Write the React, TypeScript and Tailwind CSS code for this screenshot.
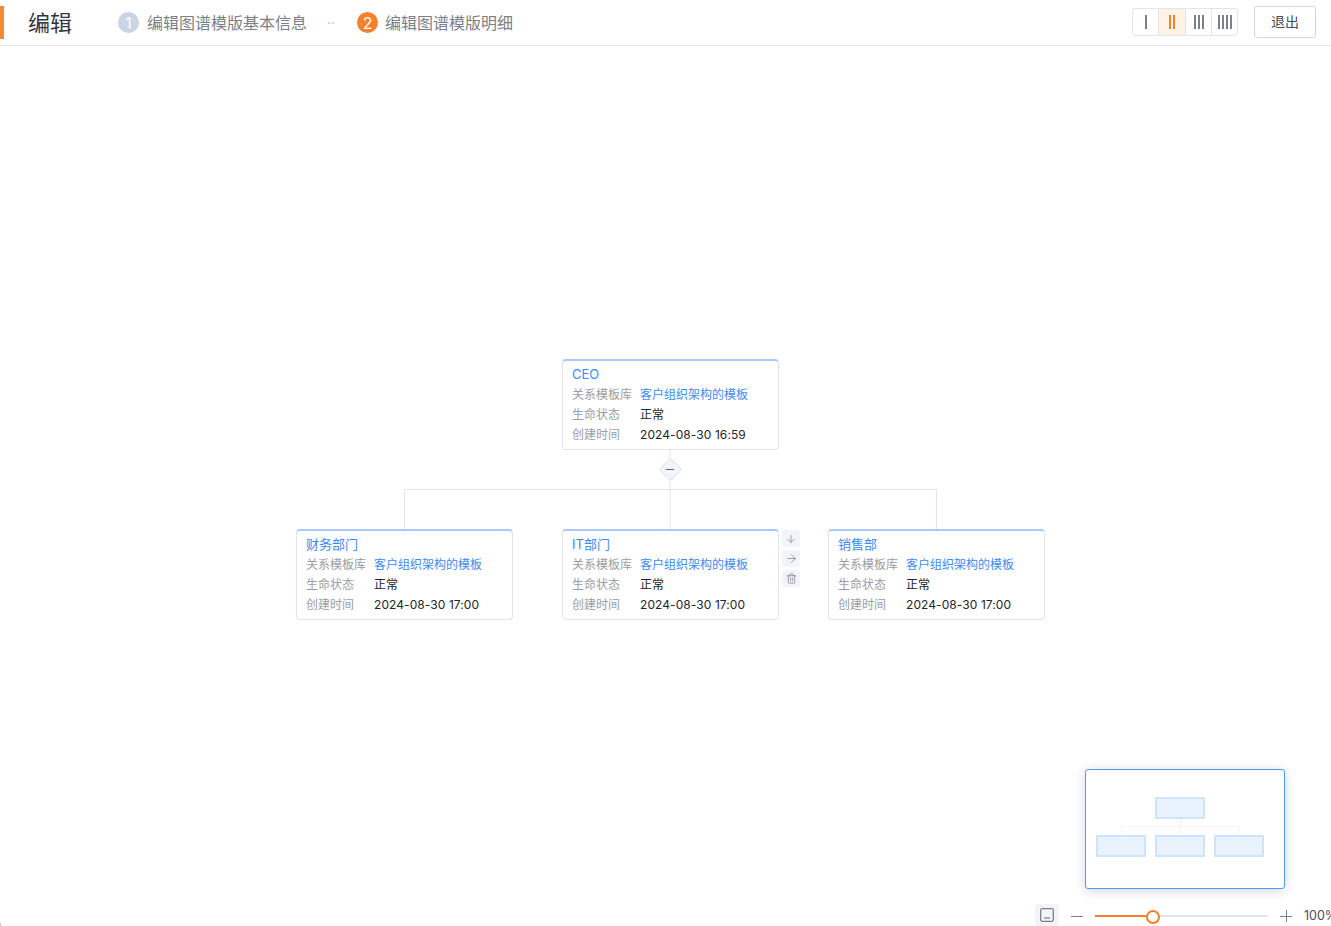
import { ArrowDown, ArrowRight, Trash2 } from 'lucide-react';

const fontStack = 'font-[Inter,"Noto_Sans_CJK_SC",sans-serif]';

const nodes = [
  { name: 'CEO', time: '2024-08-30 16:59', pos: 'left-[562px] top-[359px]' },
  { name: '财务部门', time: '2024-08-30 17:00', pos: 'left-[296px] top-[529px]' },
  { name: 'IT部门', time: '2024-08-30 17:00', pos: 'left-[562px] top-[529px]' },
  { name: '销售部', time: '2024-08-30 17:00', pos: 'left-[828px] top-[529px]' },
];

function Steps() {
  return (
    <div className="ml-[46px] flex items-center text-base text-[#7b7f87]">
      <span className="flex h-[21px] w-[21px] items-center justify-center rounded-full bg-[#c9d4e5] text-white">1</span>
      <span className="ml-2">编辑图谱模版基本信息</span>
      <span className="ml-5 text-sm text-[#b9c2d0]">··</span>
      <span className="ml-[22px] flex h-[21px] w-[21px] items-center justify-center rounded-full bg-[#f5812c] text-white">2</span>
      <span className="ml-[7px]">编辑图谱模版明细</span>
    </div>
  );
}

function Bars({ count, width, active }: { count: number; width: string; active?: boolean }) {
  return (
    <div
      className={`flex h-full items-center justify-center gap-[2px] border-r border-[#e2e4ec] last:border-r-0 ${width} ${active ? 'bg-[#fef3e4]' : ''}`}
    >
      {Array.from({ length: count }).map((_, i) => (
        <span key={i} className={`h-[14px] w-[2px] ${active ? 'bg-[#f5812c]' : 'bg-[#7c8089]'}`} />
      ))}
    </div>
  );
}

function Header() {
  return (
    <header className="flex h-[46px] items-center border-b border-[#e3e4e8] bg-white pr-[15px]">
      <div className="h-[33px] w-1 bg-[#f58a35]" />
      <h1 className="ml-6 text-[22px] leading-none text-[#33373f]">编辑</h1>
      <Steps />
      <div className="mb-[2px] ml-auto flex items-center">
        <div className="flex h-[28px] items-center overflow-hidden rounded-[3px] border border-[#e2e4ec]">
          <Bars count={1} width="w-[26px]" />
          <Bars count={2} width="w-[27px]" active />
          <Bars count={3} width="w-[26px]" />
          <Bars count={4} width="w-[25px]" />
        </div>
        <button className="ml-4 h-8 w-[62px] rounded-[3px] border border-[#d3d5dc] text-sm text-[#4a4e57]">退出</button>
      </div>
    </header>
  );
}

function Row({ label, children }: { label: string; children: React.ReactNode }) {
  return (
    <div className="flex h-5 items-center">
      <span className="w-[68px] shrink-0 text-[#9a9da5]">{label}</span>
      {children}
    </div>
  );
}

function NodeCard({ name, time, pos }: { name: string; time: string; pos: string }) {
  return (
    <div className={`absolute h-[91px] w-[217px] rounded-[4px] border border-t-2 border-[#e2e4ec] border-t-[#a9c9fb] bg-white pl-[9px] pr-2 pt-[4px] text-xs ${pos}`}>
      <div className="flex h-5 items-center text-[13px] text-[#3d8bf2]">{name}</div>
      <Row label="关系模板库">
        <span className="text-[#3d8bf2]">客户组织架构的模板</span>
      </Row>
      <Row label="生命状态">
        <span className="text-[#22252b]">正常</span>
      </Row>
      <Row label="创建时间">
        <span className="tracking-[0.08px] text-[#22252b]">{time}</span>
      </Row>
    </div>
  );
}

function Connectors() {
  return (
    <svg className="absolute left-0 top-0" width="1331" height="926" fill="none" stroke="#e2e4ec" strokeWidth="1">
      <path d="M670 449V529M404.5 529V489.5H936.5V529" />
    </svg>
  );
}

function NodeActions() {
  return (
    <div className="absolute left-[782px] top-[530px] flex flex-col gap-[3px] text-[#7a7e88]">
      <span className="flex h-[17px] w-[18px] items-center justify-center rounded-[3px] bg-[#f3f4fa]">
        <ArrowDown size={12} strokeWidth={1.4} />
      </span>
      <span className="flex h-[17px] w-[18px] items-center justify-center rounded-[3px] bg-[#f3f4fa]">
        <ArrowRight size={13} strokeWidth={1.4} />
      </span>
      <span className="flex h-[17px] w-[18px] items-center justify-center rounded-[3px] bg-[#f3f4fa]">
        <Trash2 size={11} strokeWidth={1.6} />
      </span>
    </div>
  );
}

function Collapse() {
  return (
    <div className="absolute left-[658px] top-[457px] flex h-6 w-6 items-center justify-center">
      <div className="h-[17px] w-[17px] rotate-45 rounded-[3px] border border-[#e2e4ec] bg-[#f3f4f8]" />
      <span className="absolute h-px w-2 bg-[#5f636c]" />
    </div>
  );
}

function MiniMap() {
  const box = 'h-[22px] w-[50px] border-2 border-[#d0e3fd] bg-[#e8f3fe]';
  return (
    <div className="absolute left-[1085px] top-[769px] flex h-[120px] w-[200px] flex-col items-center rounded-[3px] border border-[#4a9dfa] bg-white pr-[10px] pt-[27px] shadow-[0_2px_12px_rgba(0,0,0,0.16)]">
      <div className={box} />
      <div className="h-[7px] w-px bg-[#f1f2f4]" />
      <div className="relative h-[9px] w-[119px] border-x border-t border-[#f4f5f6]">
        <span className="absolute left-[58px] top-0 h-full w-px bg-[#f1f2f4]" />
      </div>
      <div className="flex gap-[9px]">
        <div className={box} />
        <div className={box} />
        <div className={box} />
      </div>
    </div>
  );
}

function ZoomBar() {
  return (
    <div className="absolute left-[1035px] top-[904px] flex h-[22px] w-[296px] items-center overflow-hidden whitespace-nowrap">
      <span className="flex h-[22px] w-6 shrink-0 items-center justify-center rounded-[3px] bg-[#f3f4fa]">
        <svg width="14" height="14" viewBox="0 0 14 14" fill="none" stroke="#7c8089" strokeWidth="1.3">
          <rect x="0.7" y="0.7" width="12.6" height="12.6" rx="1.5" />
          <path d="M4 10h6" />
        </svg>
      </span>
      <span className="ml-3 mt-[2px] h-px w-3 shrink-0 bg-[#7c8089]" />
      <div className="relative ml-3 mt-[2px] h-[2px] w-[173px] shrink-0 bg-[#e0e3ea]">
        <div className="h-full w-[58px] bg-[#f5812c]" />
        <span className="absolute left-[51px] top-[-5px] h-[14px] w-[14px] rounded-full border-2 border-[#f5812c] bg-white" />
      </div>
      <span className="relative ml-3 mt-[2px] h-3 w-3 shrink-0">
        <span className="absolute left-0 top-[5.5px] h-px w-3 bg-[#7c8089]" />
        <span className="absolute left-[5.5px] top-0 h-3 w-px bg-[#7c8089]" />
      </span>
      <span className="ml-3 mt-[2px] shrink-0 text-[12.5px] text-[#4a4e57]">100%</span>
    </div>
  );
}

export default function App() {
  return (
    <div className={`relative h-[926px] w-[1331px] overflow-hidden bg-white ${fontStack}`}>
      <Header />
      <Connectors />
      {nodes.map((node) => (
        <NodeCard key={node.name} {...node} />
      ))}
      <Collapse />
      <NodeActions />
      <MiniMap />
      <ZoomBar />
      <span className="absolute bottom-0 left-0 h-[3px] w-px bg-[#c4c6cc]" />
    </div>
  );
}
